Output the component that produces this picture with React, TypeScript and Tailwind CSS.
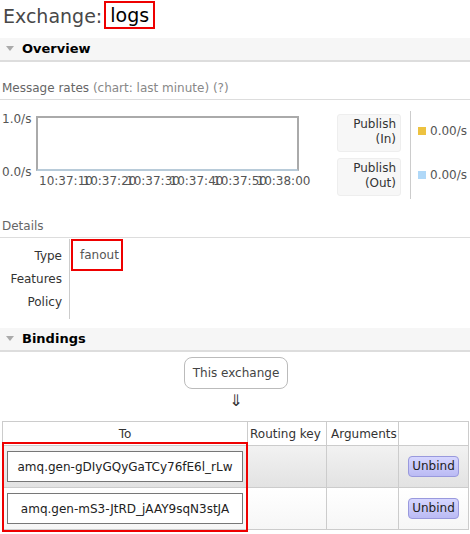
import React from 'react';

const font = { fontFamily: '"DejaVu Sans", Verdana, sans-serif' };

function SectionHeader({ title }: { title: string }) {
    return (
        <div className="flex items-center h-[24px] bg-[#f6f6f6] border-b-2 border-[#dddddd] pl-[6px]">
            <svg width="8" height="6" viewBox="0 0 8 6" className="mr-[8px]">
                <path d="M0 0 L8 0 L4 5 Z" fill="#aaaaaa" />
            </svg>
            <span className="text-[13px] font-bold text-black">{title}</span>
        </div>
    );
}

function SubHeading({ children }: { children: React.ReactNode }) {
    return (
        <div className="text-[12px] text-[#666] border-b border-[#dddddd] pl-[2px] pb-[3px] leading-[15px]">
            {children}
        </div>
    );
}

function RateLabel({ top, bottom }: { top: string; bottom: string }) {
    return (
        <div className="w-[64px] h-[38px] bg-[#f7f7f7] rounded-[3px] border border-[#eeeeee] text-right pr-[4px] pt-[2px] text-[12px] leading-[15px] text-[#333]">
            <div>{top}</div>
            <div>{bottom}</div>
        </div>
    );
}

export default function App() {
    const bindings = ['amq.gen-gDIyGQyGaTCy76fE6l_rLw', 'amq.gen-mS3-JtRD_jAAY9sqN3stJA'];
    const times = ['10:37:10', '10:37:20', '10:37:30', '10:37:40', '10:37:50', '10:38:00'];

    return (
        <div className="w-[470px] h-[534px] bg-white overflow-hidden text-[#444]" style={font}>
            <div className="flex items-end h-[30px] pl-[3px] text-[19px] leading-[24px] text-[#484848]">
                <span className="pb-[2px]">Exchange:</span>
                <span className="ml-[2px] border-2 border-[#ee0000] px-[4px] h-[28px] mb-[1px] text-black leading-[24px]">logs</span>
            </div>

            <div className="mt-[8px]">
                <SectionHeader title="Overview" />
            </div>

            <div className="mt-[19px]">
                <SubHeading>
                    <span>Message rates</span> <span className="text-[#888]">(chart: last minute) (?)</span>
                </SubHeading>
            </div>

            <div className="flex mt-[11px] h-[88px]">
                <div className="relative w-[310px]">
                    <div className="flex">
                        <div className="flex flex-col justify-between w-[36px] h-[62px] text-[12px] text-[#555] pl-[2px]">
                            <span className="leading-[14px] mt-[1px]">1.0/s</span>
                            <span className="leading-[14px] mb-[-6px]">0.0/s</span>
                        </div>
                        <div className="w-[263px] h-[55px] mt-[5px] border-2 border-[#aaaaaa] border-b-[#b8cbd9]" />
                    </div>
                    <div className="flex pl-[39px] mt-[1px] text-[12px] text-[#555] leading-[14px]">
                        {times.map((t) => (
                            <span key={t} className="w-[43.5px] shrink-0 whitespace-nowrap">{t}</span>
                        ))}
                    </div>
                </div>
                <div className="flex flex-col gap-[6px] ml-[27px] mt-[3px]">
                    <RateLabel top="Publish" bottom="(In)" />
                    <RateLabel top="Publish" bottom="(Out)" />
                </div>
                <div className="ml-[9px] w-[1px] bg-[#cccccc] h-[88px]" />
                <div className="flex flex-col ml-[7px] text-[12px] text-[#555]">
                    <div className="flex items-center mt-[12px] h-[16px]">
                        <span className="w-[8px] h-[8px] bg-[#edc240] mr-[4px]" />
                        <span>0.00/s</span>
                    </div>
                    <div className="flex items-center mt-[28px] h-[16px]">
                        <span className="w-[8px] h-[8px] bg-[#afd8f8] mr-[4px]" />
                        <span>0.00/s</span>
                    </div>
                </div>
            </div>

            <div className="mt-[20px]">
                <SubHeading>Details</SubHeading>
            </div>

            <div className="flex mt-[1px] text-[12px] text-[#333]">
                <div className="w-[70px] border-r border-[#cccccc] text-right pr-[7px] pt-[6px] pb-[5px] leading-[23px]">
                    <div>Type</div>
                    <div>Features</div>
                    <div>Policy</div>
                </div>
                <div className="pl-[1px]">
                    <div className="border-2 border-[#ee0000] w-[52px] h-[32px] flex items-center pl-[7px] text-[#555]">fanout</div>
                </div>
            </div>

            <div className="mt-[9px]">
                <SectionHeader title="Bindings" />
            </div>

            <div className="flex flex-col items-center mt-[5px] pl-[2px]">
                <div className="border border-[#bbbbbb] rounded-[8px] px-[8px] h-[32px] flex items-center text-[12px] text-[#444]">
                    This exchange
                </div>
                <div className="text-[16px] leading-[22px] text-[#333] mt-[1px]">⇓</div>
            </div>

            <div className="relative mt-[9px] ml-[2px] w-[467px]">
                <table className="w-full border-collapse text-[12px] text-[#333]">
                    <thead>
                        <tr className="h-[24px]">
                            <th className="font-normal border border-[#cccccc] w-[245px] text-center">To</th>
                            <th className="font-normal border border-[#cccccc] w-[79px] text-left pl-[2px] whitespace-nowrap">Routing key</th>
                            <th className="font-normal border border-[#cccccc] w-[72px] text-left pl-[4px]">Arguments</th>
                            <th className="font-normal border border-[#cccccc]" />
                        </tr>
                    </thead>
                    <tbody>
                        {bindings.map((b, i) => (
                            <tr
                                key={b}
                                className={
                                    i === 0
                                        ? 'h-[42px] bg-gradient-to-b from-[#f2f2f2] to-[#e2e2e2]'
                                        : 'h-[42px] bg-gradient-to-b from-[#ffffff] to-[#f6f6f6]'
                                }
                            >
                                <td className="border border-[#cccccc] px-[4px]">
                                    <div className="border border-[#777777] bg-white h-[31px] flex items-center justify-center text-[12px] text-[#222]">
                                        {b}
                                    </div>
                                </td>
                                <td className="border border-[#cccccc]" />
                                <td className="border border-[#cccccc]" />
                                <td className="border border-[#cccccc] text-center">
                                    <button className="h-[21px] px-[3px] rounded-[4px] border border-[#9999dd] bg-gradient-to-b from-[#d6d6ff] to-[#bbbbf4] text-[12px] text-[#222] leading-[19px]">
                                        Unbind
                                    </button>
                                </td>
                            </tr>
                        ))}
                    </tbody>
                </table>
                <div className="absolute left-0 top-[21px] w-[246px] h-[90px] border-2 border-[#ee0000] pointer-events-none" />
            </div>
        </div>
    );
}
